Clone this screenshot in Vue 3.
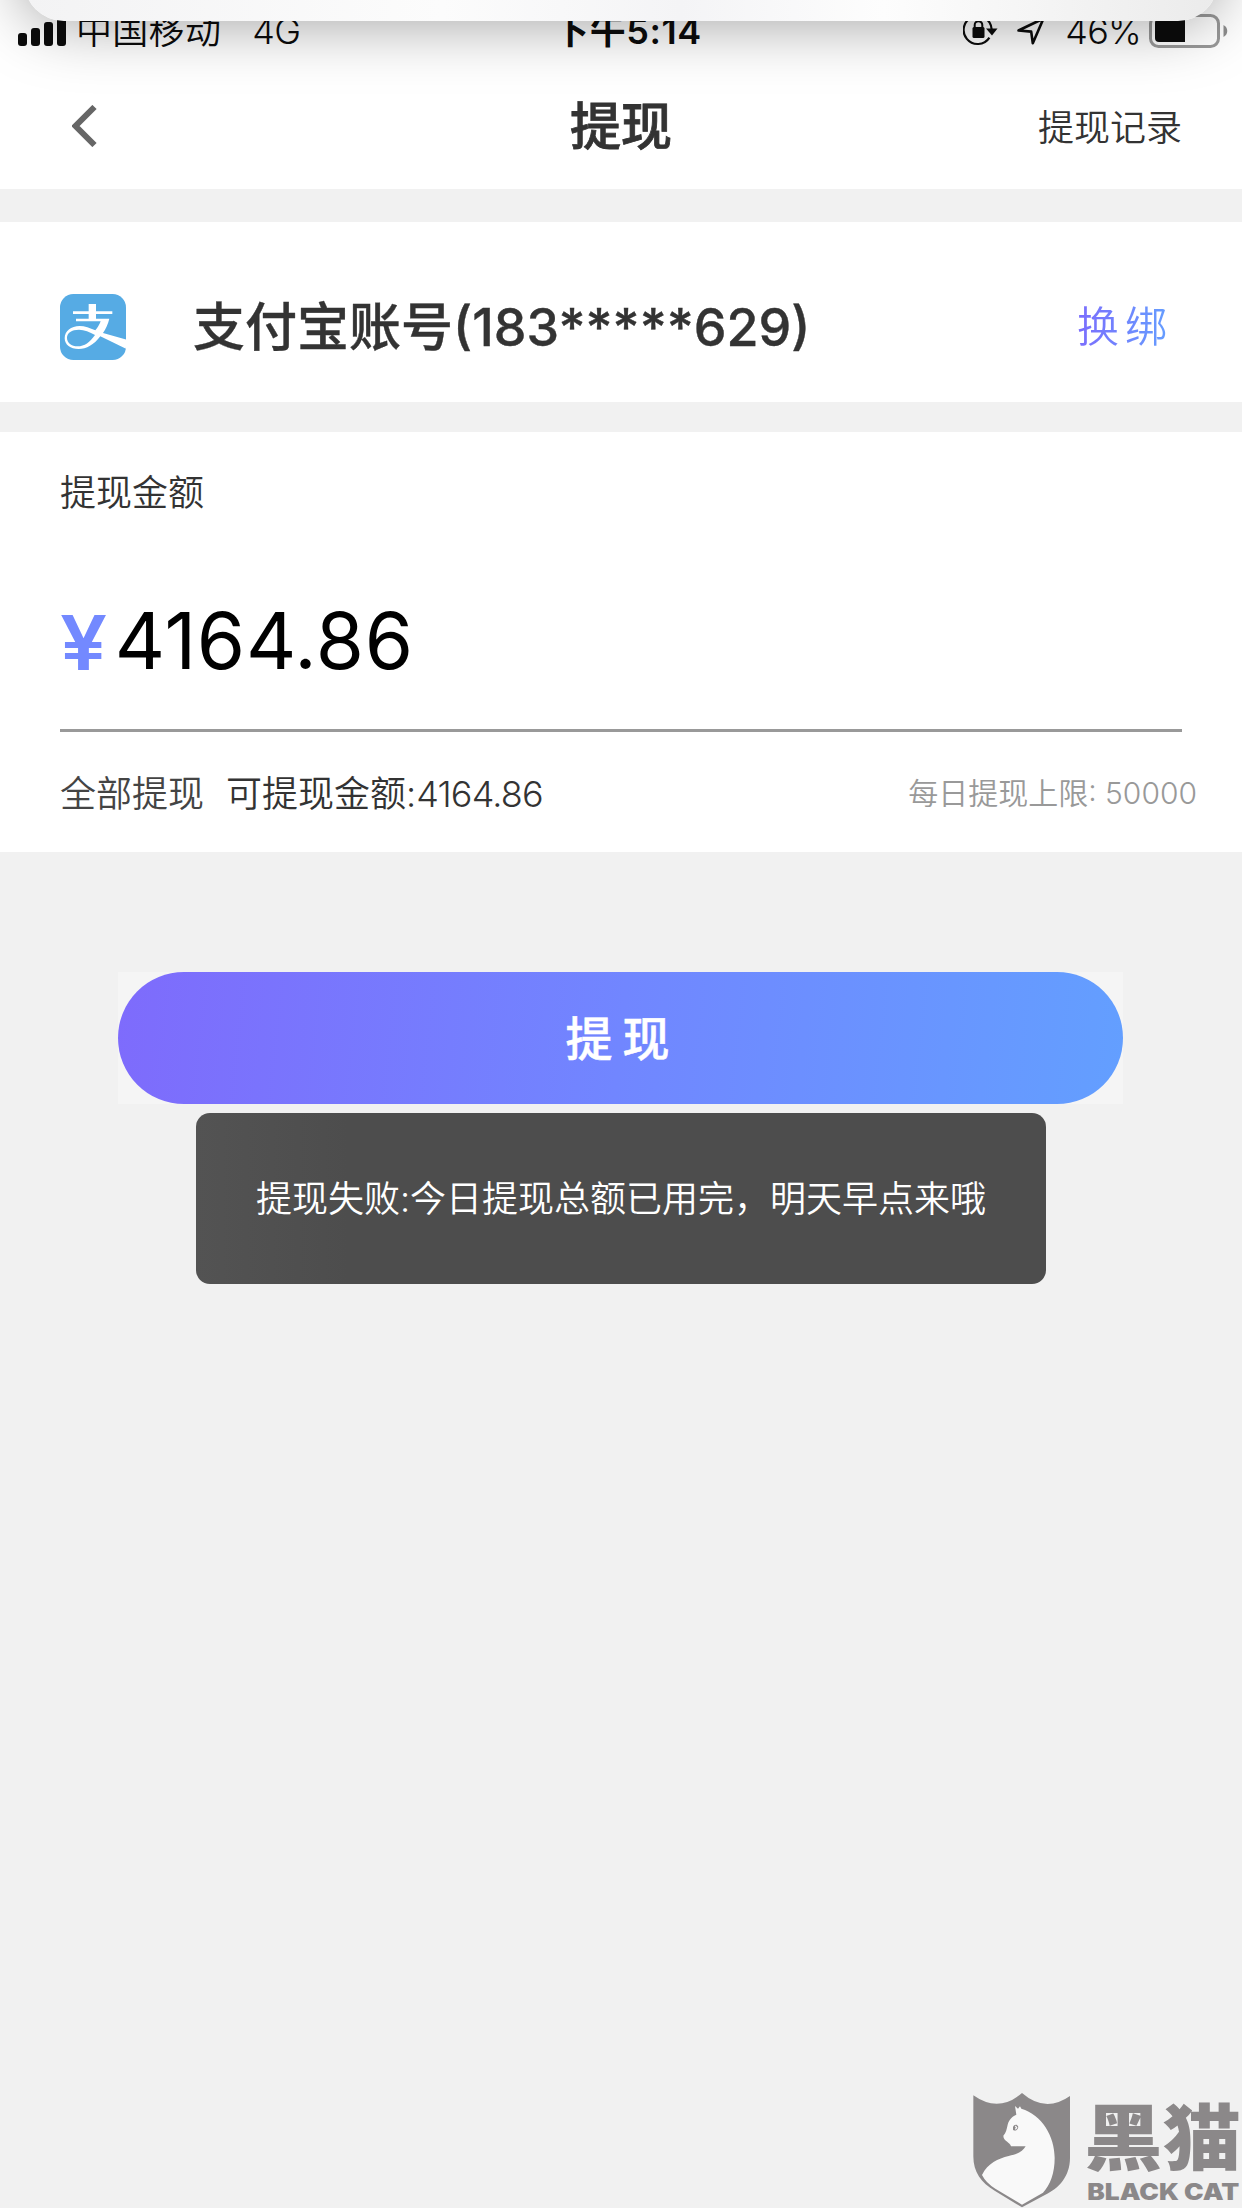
<template>
  <div class="page">
    <div class="sheet"></div>
    <header class="top">
      <div class="status">
        <div class="status-left">
          <svg class="signal" width="48" height="30" viewBox="0 0 48 30">
            <rect x="0" y="17" width="9" height="13" rx="3" />
            <rect x="13" y="12" width="9" height="18" rx="3" />
            <rect x="26" y="6" width="9" height="24" rx="3" />
            <rect x="39" y="0" width="9" height="30" rx="3" />
          </svg>
          <span class="carrier">中国移动</span>
          <span class="network">4G</span>
        </div>
        <div class="clock">下午5:14</div>
        <div class="status-right">
          <svg class="lock" width="36" height="32" viewBox="0 0 36 32">
            <path d="M26.4 22.6A14 14 0 1 1 28.6 14" fill="none" stroke="#0c0c0c" stroke-width="2.2" />
            <path d="M23 13.5h11.5L29 20.5z" />
            <rect x="9.5" y="12" width="12" height="11" rx="1.5" />
            <path d="M11.7 13v-3a3.800 3.800 0 0 1 7.600 0v3" fill="none" stroke="#0c0c0c" stroke-width="2" />
          </svg>
          <svg class="location" width="30" height="32" viewBox="0 0 30 32">
            <path d="M2.5 15.5L27.5 3.5L16.8 28.2L15.2 16.6z" fill="none" stroke="#0c0c0c" stroke-width="2.6" stroke-linejoin="round" />
          </svg>
          <span class="percent">46%</span>
          <svg class="battery" width="79" height="34" viewBox="0 0 79 34">
            <rect x="1.5" y="1.5" width="68" height="31" rx="8" fill="none" stroke="#999" stroke-width="3" />
            <path d="M74.5 11v12c5-2.500 5-9.500 0-12z" fill="#8e8e8e" />
            <path d="M36 5v23H10a4 4 0 0 1-4-4V9a4 4 0 0 1 4-4z" />
          </svg>
        </div>
      </div>
      <nav class="nav">
        <svg class="back" width="26" height="42" viewBox="0 0 26 42">
          <path d="M22.500 2L3.500 21L22.500 40" fill="none" stroke="#666" stroke-width="6" />
        </svg>
        <h1>提现</h1>
        <a class="records">提现记录</a>
      </nav>
    </header>

    <section class="account">
      <svg class="alipay" width="66" height="66" viewBox="0 0 198 198">
        <defs>
          <clipPath id="tile"><rect width="198" height="198" rx="40" /></clipPath>
        </defs>
        <g clip-path="url(#tile)">
          <rect width="198" height="198" fill="#56abe4" />
          <path d="M86 30h22v22h49v8h-49v14h40c-4 17-11 31-19 43l72 20v29l-80-39c-20 26-41 38-65 38c-25 0-42-13-42-32c0-22 19-37 45-37c15 0 31 6 47 13c7-8 12-17 16-27H48v-8h38V60H39v-8h47z" fill="#fff" />
          <path d="M105 123c-16-9-32-16-48-16c-22 0-36 9-36 24c0 16 13 26 32 26c20 0 37-12 52-34z" fill="#56abe4" />
        </g>
      </svg>
      <span class="account-name">支付宝账号({{ phone }})</span>
      <a class="rebind">换绑</a>
    </section>

    <section class="amount">
      <div class="label">提现金额</div>
      <div class="money">
        <span class="yen">¥</span>
        <span class="value">{{ balance }}</span>
      </div>
      <div class="hint">
        <span class="all">全部提现</span>
        <span class="available">可提现金额:<span class="num">{{ balance }}</span></span>
        <span class="limit">每日提现上限: {{ limit }}</span>
      </div>
    </section>

    <div class="action">
      <button>提现</button>
    </div>

    <div class="toast">{{ message }}</div>

    <svg class="watermark" width="300" height="140" viewBox="0 0 900 420">
      <path d="M94 82Q170 136 240 75Q310 136 384 84V270C384 325 350 362 310 380L240 418L158 368C118 345 94 312 94 265z" fill="#8b8889" />
      <path d="M219 114L228 122L234 115L238 122C300 140 338 205 338 270C338 315 325 350 303 374L240 410L160 362Q132 345 120 321C138 285 168 272 200 264C225 259 243 250 251 235H207C205 222 184 220 184 203C192 194 194 184 197 170C201 154 211 145 223 140z" fill="#f9f9f9" />
      <path d="M213 177C217 168 226 168 229 177C226 188 218 190 213 185z" fill="#8b8889" />
      <path d="M220 174L224 179L220 184" fill="none" stroke="#f9f9f9" stroke-width="4" />
      <text class="wm-cn" x="427" y="287" textLength="470" lengthAdjust="spacingAndGlyphs">黑猫</text>
      <text class="wm-en" x="436" y="397" textLength="456" lengthAdjust="spacingAndGlyphs">BLACK CAT</text>
    </svg>
  </div>
</template>

<script setup>
import { ref } from "vue";

const phone = ref("183*****629");
const balance = ref("4164.86");
const limit = ref(50000);
const message = ref("提现失败:今日提现总额已用完，明天早点来哦");
</script>

<style>
body {
  background: #f1f1f1;
}
</style>

<style scoped>
.page {
  position: relative;
  width: 1242px;
  height: 2208px;
  overflow: hidden;
  background: #f1f1f1;
  color: #333;
  font-family: Inter, "Noto Sans CJK SC", sans-serif;
  font-size: 36px;
  font-weight: 350;
}

/* bottom edge of the banner sliding over the status bar */
.sheet {
  position: absolute;
  z-index: 2;
  top: -120px;
  left: 24px;
  right: 24px;
  height: 141px;
  border-radius: 40px;
  background: linear-gradient(90deg, #f3f3f4, #fcfcfc 35%, #f4f4f6 55%, #fdfdfd 72%, #ebebeb);
  box-shadow: 0 0 66px rgba(0, 0, 0, 0.4);
}

.top {
  height: 189px;
  background: #fff;
}

.status {
  display: grid;
  grid-template-columns: 1fr auto 1fr;
  height: 62px;
  line-height: 62px;
  color: #0c0c0c;
}

.status svg {
  fill: #0c0c0c;
  flex: none;
}

.status-left,
.status-right {
  display: flex;
  align-items: center;
}

.status-left {
  padding-left: 18px;
}

.carrier {
  margin-left: 10px;
  letter-spacing: 0.3px;
}

.network {
  margin-left: 31px;
  letter-spacing: -0.5px;
}

.clock {
  padding-left: 13px;
  font-weight: 600;
  letter-spacing: 0.6px;
}

.status-right {
  justify-content: flex-end;
  padding-right: 14px;
}

.lock {
  margin-right: 17px;
}

.location {
  margin-right: 19px;
}

.percent {
  margin-right: 8px;
  letter-spacing: -0.8px;
}

.nav {
  display: grid;
  grid-template-columns: 1fr auto 1fr;
  align-items: center;
  height: 127px;
  padding: 0 60px 0 72px;
}

.nav h1 {
  margin: 0 0 0 -12px;
  padding-top: 1px;
  font-size: 51px;
  font-weight: 500;
  line-height: 127px;
  -webkit-text-stroke: 0.8px #333;
}

.records {
  padding-bottom: 3px;
  text-align: right;
}

.account {
  display: flex;
  align-items: center;
  box-sizing: border-box;
  height: 180px;
  margin-top: 33px;
  padding: 30px 69px 0 60px;
  background: #fff;
}

.account-name {
  margin-left: 67px;
  padding-bottom: 8px;
  font-size: 52px;
  font-weight: 500;
  -webkit-text-stroke: 0.4px #333;
}

.rebind {
  margin-left: auto;
  padding-bottom: 7px;
  font-size: 42px;
  letter-spacing: 6px;
  background: linear-gradient(90deg, #7b6dfd, #64a0ff);
  -webkit-background-clip: text;
  background-clip: text;
  color: transparent;
}

.amount {
  box-sizing: border-box;
  height: 420px;
  margin-top: 30px;
  padding: 0 45px 0 60px;
  background: #fff;
}

.label {
  height: 122px;
  line-height: 122px;
}

.money {
  display: flex;
  align-items: center;
  height: 175px;
  margin-right: 15px;
  border-bottom: 3px solid #999;
}

.yen {
  color: #7389ff;
  font-size: 76px;
  font-weight: 600;
  transform: scaleX(1.1);
  transform-origin: left;
}

.value {
  margin-left: 12px;
  padding-bottom: 2px;
  color: #000;
  font-size: 78px;
  font-weight: 400;
  letter-spacing: 0.7px;
}

.hint {
  display: flex;
  align-items: center;
  height: 117px;
}

.all {
  color: #444;
}

.available {
  margin-left: 22px;
}

.num {
  letter-spacing: -0.8px;
}

.limit {
  margin-left: auto;
  color: #999;
  font-size: 30px;
}

.action {
  width: 1005px;
  height: 132px;
  margin: 120px auto 0 118px;
  background: #f5f5f5;
}

.action button {
  width: 100%;
  height: 132px;
  padding: 0 0 5px 4px;
  border: none;
  border-radius: 66px;
  background: linear-gradient(96deg, #7e6bfc, #7186ff 50%, #639fff);
  color: #fff;
  font-family: inherit;
  font-size: 47px;
  font-weight: 500;
  letter-spacing: 10px;
  -webkit-text-stroke: 0.5px #fff;
}

.toast {
  width: 850px;
  height: 171px;
  margin: 9px auto 0;
  border-radius: 14px;
  background: linear-gradient(90deg, #535353, #4d4d4d 18%);
  color: #fff;
  line-height: 173px;
  text-align: center;
  white-space: nowrap;
}

.watermark {
  position: absolute;
  right: 0;
  bottom: 0;
}

.wm-cn {
  fill: #8b8889;
  font-family: "Noto Sans CJK SC", sans-serif;
  font-size: 214px;
  font-weight: 900;
}

.wm-en {
  fill: #8b8889;
  font-family: Inter, sans-serif;
  font-size: 68px;
  font-weight: 900;
}
</style>
